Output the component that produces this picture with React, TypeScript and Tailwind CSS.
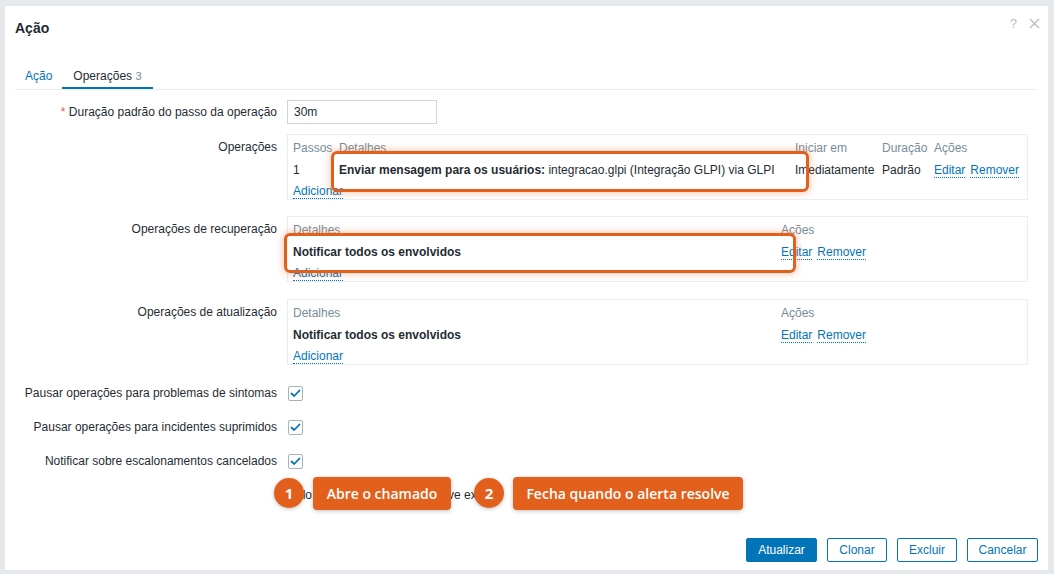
import React from 'react'

const txt = 'text-[#1f2c33]'
const link = 'text-[#0275b8] border-b border-dotted border-[#0275b8] leading-[14px] cursor-pointer'

function Label({ children, top = false }: { children: React.ReactNode; top?: boolean }) {
  return (
    <div className={`w-[262px] shrink-0 text-right ${txt} ${top ? 'pt-[4px]' : ''}`}>{children}</div>
  )
}

function Check() {
  return (
    <span className="w-[15px] h-[15px] border border-[#a6b3bb] rounded-[2px] bg-white flex items-center justify-center ml-[1px] mt-[1px]">
      <svg width="11" height="9" viewBox="0 0 11 9" fill="none">
        <path d="M1.5 4.5 L4.2 7 L9.5 1.5" stroke="#0275b8" strokeWidth="1.8" strokeLinecap="round" strokeLinejoin="round" />
      </svg>
    </span>
  )
}

function Highlight({ className }: { className: string }) {
  return (
    <div className={`absolute border-[3px] border-[#e2601b] rounded-[6px] shadow-[0_0_6px_2px_rgba(232,110,50,0.3)] pointer-events-none ${className}`} />
  )
}

function Btn({ children, primary = false, w }: { children: React.ReactNode; primary?: boolean; w: string }) {
  return (
    <button
      className={`${w} h-[24px] rounded-[2px] border border-[#0275b8] text-[12px] ${primary ? 'bg-[#0275b8] text-white' : 'bg-white text-[#0275b8]'}`}
    >
      {children}
    </button>
  )
}

export default function App() {
  return (
    <div className="h-[574px] w-[1054px] bg-[#e6e9ec] pt-[6px] pl-[5px] pr-[6px] pb-[4px] font-['Liberation_Sans',Arial,sans-serif] text-[12px] overflow-hidden">
      <div className="relative h-full bg-white px-[10px] flex flex-col">
        {/* header */}
        <div className="pt-[13px] h-[31px]">
          <h1 className={`text-[14px] leading-[18px] font-bold ${txt}`}>Ação</h1>
        </div>
        <div className="absolute top-[8px] right-[8px] flex items-center gap-[12px] text-[#b9c2c8]">
          <span className="text-[13px]">?</span>
          <svg width="11" height="11" viewBox="0 0 11 11">
            <path d="M1 1 L10 10 M10 1 L1 10" stroke="#b9c2c8" strokeWidth="1.5" />
          </svg>
        </div>

        {/* tabs */}
        <div className="mt-[25px] flex border-b border-[#ebeef0] h-[28px]">
          <div className="px-[10px] pt-[5px] text-[#0275b8]">Ação</div>
          <div className={`px-[11px] pt-[5px] ${txt} border-b-2 border-[#0275b8] h-[27px]`}>
            Operações <span className="text-[#768d99] text-[11px]">3</span>
          </div>
        </div>

        {/* duration */}
        <div className="mt-[10px] flex items-center gap-[10px]">
          <Label><span className="text-[#e45959]">*</span> Duração padrão do passo da operação</Label>
          <div className={`w-[150px] h-[24px] border border-[#cfd4d8] px-[6px] flex items-center ${txt}`}>30m</div>
        </div>

        {/* operations */}
        <div className="mt-[10px] flex gap-[10px]">
          <Label top>Operações</Label>
          <div className="relative w-[741px] h-[66px] border border-[#ebeef0] pl-[5px] pt-[2px]">
            <div className="grid grid-cols-[46px_456px_87px_52px_auto] leading-[22px]">
              <div className="text-[#768d99]">Passos</div>
              <div className="text-[#768d99]">Detalhes</div>
              <div className="text-[#768d99]">Iniciar em</div>
              <div className="text-[#768d99]">Duração</div>
              <div className="text-[#768d99]">Ações</div>
              <div className={txt}>1</div>
              <div className={txt}><b>Enviar mensagem para os usuários:</b> integracao.glpi (Integração GLPI) via GLPI</div>
              <div className={txt}>Imediatamente</div>
              <div className={txt}>Padrão</div>
              <div className="flex gap-[5px] items-center"><span className={link}>Editar</span><span className={link}>Remover</span></div>
            </div>
            <div className="leading-[20px]"><span className={link}>Adicionar</span></div>
            <Highlight className="left-[43px] top-[16px] w-[478px] h-[41px]" />
          </div>
        </div>

        {/* recovery */}
        <div className="mt-[16px] flex gap-[10px]">
          <Label top>Operações de recuperação</Label>
          <div className="relative w-[741px] h-[66px] border border-[#ebeef0] pl-[5px] pt-[2px]">
            <div className="grid grid-cols-[488px_auto] leading-[22px]">
              <div className="text-[#768d99]">Detalhes</div>
              <div className="text-[#768d99]">Ações</div>
              <div className={`${txt} font-bold`}>Notificar todos os envolvidos</div>
              <div className="flex gap-[5px] items-center"><span className={link}>Editar</span><span className={link}>Remover</span></div>
            </div>
            <div className="leading-[20px]"><span className={link}>Adicionar</span></div>
            <Highlight className="left-[-4px] top-[16px] w-[512px] h-[40px]" />
          </div>
        </div>

        {/* update */}
        <div className="mt-[17px] flex gap-[10px]">
          <Label top>Operações de atualização</Label>
          <div className="relative w-[741px] h-[66px] border border-[#ebeef0] pl-[5px] pt-[2px]">
            <div className="grid grid-cols-[488px_auto] leading-[22px]">
              <div className="text-[#768d99]">Detalhes</div>
              <div className="text-[#768d99]">Ações</div>
              <div className={`${txt} font-bold`}>Notificar todos os envolvidos</div>
              <div className="flex gap-[5px] items-center"><span className={link}>Editar</span><span className={link}>Remover</span></div>
            </div>
            <div className="leading-[20px]"><span className={link}>Adicionar</span></div>
          </div>
        </div>

        {/* checkboxes */}
        <div className="mt-[16px] flex flex-col gap-[10px]">
          {[
            'Pausar operações para problemas de sintomas',
            'Pausar operações para incidentes suprimidos',
            'Notificar sobre escalonamentos cancelados',
          ].map((t) => (
            <div key={t} className="flex items-center gap-[10px] h-[24px]">
              <Label>{t}</Label>
              <Check />
            </div>
          ))}
        </div>

        {/* note + callouts */}
        <div className="mt-[10px] flex items-center gap-[10px] h-[24px]">
          <div className="w-[262px] shrink-0" />
          <div className={`relative ${txt} pl-[1px]`}>
            Pelo menos uma operação deve existir.
            <div className="absolute left-[-13px] top-[-8px] w-[30px] h-[30px] rounded-full bg-[#e2601b] text-white font-['Open_Sans',sans-serif] font-bold text-[15px] flex items-center justify-center shadow-[0_1px_4px_rgba(0,0,0,0.25)]">1</div>
            <div className="absolute left-[26px] top-[-9px] w-[138px] h-[33px] rounded-[4px] bg-[#e2601b] text-white font-['Open_Sans',sans-serif] font-semibold text-[14px] flex items-center justify-center shadow-[0_1px_4px_rgba(0,0,0,0.25)] whitespace-nowrap">Abre o chamado</div>
            <div className="absolute left-[187px] top-[-8px] w-[30px] h-[30px] rounded-full bg-[#e2601b] text-white font-['Open_Sans',sans-serif] font-bold text-[15px] flex items-center justify-center shadow-[0_1px_4px_rgba(0,0,0,0.25)]">2</div>
            <div className="absolute left-[226px] top-[-9px] w-[230px] h-[33px] rounded-[4px] bg-[#e2601b] text-white font-['Open_Sans',sans-serif] font-semibold text-[14px] flex items-center justify-center shadow-[0_1px_4px_rgba(0,0,0,0.25)] whitespace-nowrap">Fecha quando o alerta resolve</div>
          </div>
        </div>

        {/* buttons */}
        <div className="mt-[31px] flex justify-end gap-[10px]">
          <Btn primary w="w-[71px]">Atualizar</Btn>
          <Btn w="w-[60px]">Clonar</Btn>
          <Btn w="w-[60px]">Excluir</Btn>
          <Btn w="w-[71px]">Cancelar</Btn>
        </div>
      </div>
    </div>
  )
}
